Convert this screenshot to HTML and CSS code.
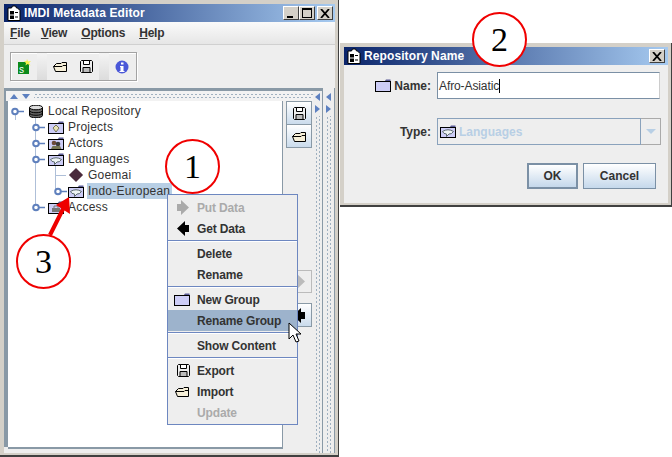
FILE: index.html
```html
<!DOCTYPE html>
<html lang="en">
<head>
<meta charset="utf-8">
<title>IMDI Metadata Editor</title>
<link rel="stylesheet" href="styles.css">
</head>
<body>
<svg class="defs" width="0" height="0" aria-hidden="true">
  <defs>
    <symbol id="app" viewBox="0 0 14 16">
      <path d="M1 3h3.500l1-2h3l1 2h1l2.500 2.500v10h-12z" fill="#fff" stroke="#000"/>
      <rect x="3" y="6" width="4" height="3.500" fill="#000"/>
      <rect x="3" y="10.500" width="4" height="3.500" fill="#000"/>
      <path d="M8 7.500h3M8 12h3" stroke="#000"/>
    </symbol>
    <symbol id="folder" viewBox="0 0 16 13">
      <path d="M9.500 2.500l1.500-2h4.500v2z" fill="#5b5b96"/>
      <rect x=".5" y="2.500" width="15" height="10" fill="#cdcdf6" stroke="#000"/>
    </symbol>
    <symbol id="lang" viewBox="0 0 16 13">
      <use href="#folder"/>
      <path d="M2.500 6.500q5.500-3.500 11 0q-2 3-4.500 2.500l-2.500 2.500v-2.500q-3 0-4-2.500z" fill="#eef4f4" stroke="#5c6a70"/>
    </symbol>
    <symbol id="proj" viewBox="0 0 16 13">
      <use href="#folder"/>
      <path d="M8 4l3 3-3 4-3-4z" fill="#e7e2b4" stroke="#76765a"/>
    </symbol>
    <symbol id="actors" viewBox="0 0 16 13">
      <use href="#folder"/>
      <circle cx="6" cy="6" r="2.300" fill="#6b4a3a"/>
      <circle cx="10" cy="7" r="2.300" fill="#3b3b3b"/>
      <path d="M3 12l1.500-3h7.500l1.500 3z" fill="#775"/>
    </symbol>
    <symbol id="access" viewBox="0 0 16 13">
      <use href="#folder"/>
      <rect x="4" y="7" width="8" height="4" fill="#777"/>
      <path d="M6 7v-2h4v2" fill="none" stroke="#777"/>
    </symbol>
    <symbol id="open" viewBox="0 0 16 13">
      <path d="M1.500 6.500l3-3h4.500l1-1h4.500v9h-11z" fill="#f6efd8" stroke="#000"/>
      <path d="M1.500 6.500h8.500l1-1h3.500" fill="none" stroke="#000"/>
    </symbol>
    <symbol id="save" viewBox="0 0 13 13">
      <path d="M1.500.5h10l1 1v10l-1 1h-10l-1-1v-10z" fill="#eee" stroke="#000"/>
      <path d="M3.500.5h6v4h-6z" fill="#fff" stroke="#000"/>
      <path d="M3 7.500h7v5h-7z" fill="#bbb" stroke="#000"/>
    </symbol>
    <symbol id="knob" viewBox="0 0 13 9">
      <path d="M7 4.500h6" stroke="#5f80bd" stroke-width="1.500"/>
      <circle cx="4" cy="4.500" r="2.800" fill="#fff" stroke="#5f80bd" stroke-width="2"/>
    </symbol>
    <symbol id="arrow" viewBox="0 0 12 15">
      <path d="M0 4h4v-4l8 7.500-8 7.500v-4h-4z"/>
    </symbol>
  </defs>
</svg>

<main class="window main-window">
  <header class="titlebar">
    <svg class="title-icon"><use href="#app"/></svg>
    <span class="title-text">IMDI Metadata Editor</span>
    <span class="title-buttons">
      <button class="winbtn"><span class="glyph-min"></span></button>
      <button class="winbtn"><span class="glyph-max"></span></button>
      <button class="winbtn winbtn-close"><svg viewBox="0 0 10 9" width="10" height="9"><path d="M1 0l8 9M9 0l-8 9" stroke="#000" stroke-width="1.800"/></svg></button>
    </span>
  </header>
  <nav class="menubar">
    <span class="menu-item"><u>F</u>ile</span>
    <span class="menu-item"><u>V</u>iew</span>
    <span class="menu-item"><u>O</u>ptions</span>
    <span class="menu-item"><u>H</u>elp</span>
  </nav>
  <div class="toolbar">
    <div class="toolbox">
      <span class="tool">
        <svg width="13" height="15" viewBox="0 0 13 15"><rect y="3" width="11" height="12" fill="#0c8a1c"/><text x="1" y="14" class="tool-s">s</text><path d="M9 0l1 2.500 3-.5-2 2 1.500 2.500-3-1.500-2 1.500.5-2.500-2-1.500 2.500-.5z" fill="#f4f04a"/></svg>
      </span>
      <span class="tool-sep"></span>
      <span class="tool"><svg width="16" height="13"><use href="#open"/></svg></span>
      <span class="tool tool-tight"><svg width="13" height="13"><use href="#save"/></svg></span>
      <span class="tool-sep"></span>
      <span class="tool"><svg width="14" height="14" viewBox="0 0 14 14"><circle cx="7" cy="7" r="6.500" fill="#4a57d8"/><rect x="6" y="2.500" width="2.500" height="2" fill="#fff"/><path d="M5 6h3.500v5h1v1h-5v-1h1v-4h-.5z" fill="#fff"/></svg></span>
    </div>
  </div>
  <div class="workspace">
    <div class="pane">
      <div class="left-area">
        <div class="split-top">
          <span class="tri-up"></span><span class="tri-down"></span><span class="dots-h"></span>
        </div>
        <div class="left-body">
          <div class="tree">
            <span class="vline vline-0"></span>
            <span class="vline vline-1"></span>
            <span class="vline vline-2"></span>
            <div class="row row-root"><svg class="knob" width="13" height="9"><use href="#knob"/></svg><svg class="db" width="14" height="13" viewBox="0 0 14 13"><path d="M.5 2.500v8c0 3 13 3 13 0v-8z" fill="#666" stroke="#000"/><ellipse cx="7" cy="2.500" rx="6.500" ry="2.300" fill="#ddd" stroke="#000"/><path d="M.5 5.500c0 3 13 3 13 0M.5 8c0 3 13 3 13 0" fill="none" stroke="#000"/></svg><span class="lbl">Local Repository</span></div>
            <div class="row row-1"><svg class="knob" width="13" height="9"><use href="#knob"/></svg><svg class="ico" width="16" height="13"><use href="#proj"/></svg><span class="lbl">Projects</span></div>
            <div class="row row-1"><svg class="knob" width="13" height="9"><use href="#knob"/></svg><svg class="ico" width="16" height="13"><use href="#actors"/></svg><span class="lbl">Actors</span></div>
            <div class="row row-1"><svg class="knob" width="13" height="9"><use href="#knob"/></svg><svg class="ico" width="16" height="13"><use href="#lang"/></svg><span class="lbl">Languages</span></div>
            <div class="row row-2"><span class="branch"></span><span class="diamond"></span><span class="lbl">Goemai</span></div>
            <div class="row row-2b"><svg class="knob" width="13" height="9"><use href="#knob"/></svg><svg class="ico" width="16" height="13"><use href="#lang"/></svg><span class="lbl lbl-sel">Indo-European</span></div>
            <div class="row row-1"><svg class="knob" width="13" height="9"><use href="#knob"/></svg><svg class="ico" width="16" height="13"><use href="#access"/></svg><span class="lbl">Access</span></div>
          </div>
          <div class="side">
            <div class="side-group">
              <button class="sidebtn"><svg width="13" height="13"><use href="#save"/></svg></button>
              <button class="sidebtn"><svg width="16" height="13"><use href="#open"/></svg></button>
            </div>
            <div class="side-low">
              <button class="sidebtn side-ghost"><svg width="12" height="15" fill="#bbb"><use href="#arrow"/></svg></button>
              <button class="sidebtn"><svg width="12" height="15" fill="#000" class="flip"><use href="#arrow"/></svg></button>
            </div>
          </div>
        </div>
      </div>
      <div class="strip strip-a"><span class="tri-left"></span><span class="tri-right"></span><span class="dots-v"></span></div>
    </div>
    <div class="strip strip-b"><span class="tri-left"></span><span class="tri-right"></span><span class="dots-v"></span></div>
  </div>
</main>

<div class="popup">
  <div class="pop-group">
    <div class="pop-item disabled"><svg width="12" height="15" fill="#aaa"><use href="#arrow"/></svg><span>Put Data</span></div>
    <div class="pop-item"><svg class="flip" width="12" height="15" fill="#000"><use href="#arrow"/></svg><span>Get Data</span></div>
  </div>
  <div class="pop-group">
    <div class="pop-item"><i></i><span>Delete</span></div>
    <div class="pop-item"><i></i><span>Rename</span></div>
  </div>
  <div class="pop-group">
    <div class="pop-item"><svg class="wide" width="16" height="13"><use href="#folder"/></svg><span>New Group</span></div>
    <div class="pop-item active"><i></i><span>Rename Group</span></div>
  </div>
  <div class="pop-group">
    <div class="pop-item"><i></i><span>Show Content</span></div>
  </div>
  <div class="pop-group">
    <div class="pop-item"><svg width="13" height="13"><use href="#save"/></svg><span>Export</span></div>
    <div class="pop-item"><svg class="wide" width="16" height="13"><use href="#open"/></svg><span>Import</span></div>
    <div class="pop-item disabled"><i></i><span>Update</span></div>
  </div>
</div>

<svg class="cursor" width="14" height="22" viewBox="0 0 14 22"><path d="M1 1v16l4-4 3 7 3-1-3-7h5z" fill="#fff" stroke="#000"/></svg>

<section class="window dialog">
  <header class="titlebar">
    <svg class="title-icon"><use href="#app"/></svg>
    <span class="title-text">Repository Name</span>
    <span class="title-buttons">
      <button class="winbtn winbtn-close"><svg viewBox="0 0 10 9" width="10" height="9"><path d="M1 0l8 9M9 0l-8 9" stroke="#000" stroke-width="1.800"/></svg></button>
    </span>
  </header>
  <div class="form">
    <div class="form-row">
      <div class="form-label"><svg width="16" height="13"><use href="#folder"/></svg><span>Name:</span></div>
      <div class="input"><span>Afro-Asiatic</span><span class="caret"></span></div>
    </div>
    <div class="form-row form-row-type">
      <div class="form-label"><span>Type:</span></div>
      <div class="combo">
        <div class="combo-field"><svg width="16" height="13"><use href="#lang"/></svg><span>Languages</span></div>
        <div class="combo-arrow"><span class="tri-combo"></span></div>
      </div>
    </div>
    <div class="actions">
      <button class="btn btn-default">OK</button>
      <button class="btn">Cancel</button>
    </div>
  </div>
</section>

<svg class="arrow-red" width="40" height="50" viewBox="0 0 40 50"><path d="M10 45L24 17" stroke="#ee0000" stroke-width="4"/><path d="M29 7L16 15 30 24z" fill="#ee0000"/></svg>
<div class="callout c1">1</div>
<div class="callout c2">2</div>
<div class="callout c3">3</div>
</body>
</html>
```

FILE: styles.css
```css
* { box-sizing: border-box; }
html, body { margin: 0; padding: 0; }
body {
  width: 672px; height: 457px; position: relative; overflow: hidden;
  background: #fff; font-family: "Liberation Sans", Arial, sans-serif;
  font-size: 12px; color: #333;
}
.defs { position: absolute; }
button { font-family: inherit; margin: 0; padding: 0; }

.window {
  position: absolute; display: flex; flex-direction: column;
  background: #eee;
  border: 4px solid #d4d0c8;
}
.main-window { left: 0; top: 0; width: 339px; height: 457px; }
.main-window::after, .dialog::after {
  content: ""; position: absolute; left: -4px; right: -4px; top: -4px; bottom: -4px;
  border-right: 1px solid #404040; border-bottom: 2px solid #404040; pointer-events: none;
}
.dialog { left: 340px; top: 43px; width: 332px; height: 164px; }

.titlebar {
  height: 18px; flex: none; display: flex; align-items: center;
  background: linear-gradient(to right, #0a246a, #a6caf0);
  color: #fff; font-weight: bold; font-size: 12px; letter-spacing: .1px; padding: 0 2px 0 3px;
}
.title-icon { width: 14px; height: 16px; margin-right: 3px; flex: none; }
.title-text { flex: 1; white-space: nowrap; }
.title-buttons { display: flex; }
.winbtn {
  width: 16px; height: 14px; background: #d4d0c8; display: flex; align-items: center; justify-content: center;
  border: 1px solid; border-color: #fff #404040 #404040 #fff;
}
.winbtn-close { margin-left: 2px; }
.glyph-min { width: 6px; height: 2px; background: #000; margin-top: 7px; margin-right: 3px; }
.glyph-max { width: 10px; height: 10px; border: 1px solid #000; border-top-width: 2px; }

.menubar {
  height: 23px; flex: none; display: flex; align-items: center; gap: 14px; padding: 0 0 1px 6px;
  background: linear-gradient(#fafafa, #e6e6e6); border-bottom: 1px solid #d0d0d0;
  font-weight: bold; color: #333; letter-spacing: -.2px;
}
.menu-item:first-child { margin-right: -3px; }
.toolbar { height: 43px; flex: none; padding: 7px 0 0 6px; background: #eee; }
.toolbox {
  width: 127px; height: 29px; border: 1px solid #a3a3a3; display: flex; align-items: stretch;
  background: #eee; box-shadow: inset 1px 1px 0 #fff, 1px 1px 0 #fff;
}
.tool { width: 28px; display: flex; align-items: center; justify-content: center; }
.tool-tight { width: 26px; }
.tool-sep { width: 10px; background: linear-gradient(#f4f4f4, #dcdcdc); }
.tool:first-child { width: 27px; }
.tool-s { font-size: 10px; fill: #fff; font-family: "Liberation Sans", sans-serif; }

.workspace { flex: 1; min-height: 0; display: flex; background: #eee; }
.pane {
  width: 319px; flex: none; display: flex; padding: 3px 0 0 4px;
  background: #eee linear-gradient(#8999a6, #8999a6) top left / 4px 359px no-repeat;
  box-shadow: inset 0 3px 0 #8999a6;
}
.left-area { width: 305px; flex: none; background: #eee; display: flex; flex-direction: column; }
.split-top {
  height: 10px; flex: none; display: flex; align-items: center; gap: 4px; padding-left: 4px;
  margin-left: -2px; background: #f2f2f2;
}
.tri-up { flex: none; border: 4px solid transparent; border-top: 0; border-bottom: 5px solid #5d80c0; width: 0; height: 0; }
.tri-down { flex: none; border: 4px solid transparent; border-bottom: 0; border-top: 5px solid #5d80c0; width: 0; height: 0; }
.dots-h {
  flex: 1; height: 6px;
  background-image: radial-gradient(circle, #9fb0c0 .7px, transparent 1px), radial-gradient(circle, #9fb0c0 .7px, transparent 1px);
  background-size: 4px 3px; background-position: 0 0, 2px 3px; background-repeat: repeat-x;
}
.left-body { flex: 1; min-height: 0; display: flex; }
.tree {
  width: 275px; flex: none; background: #fff; position: relative; padding-top: 2px;
  border-right: 1px solid #8999a6; border-bottom: 2px solid #8999a6; margin-bottom: 4px;
}
.row { height: 16px; display: flex; align-items: center; white-space: nowrap; position: relative; }
.lbl { letter-spacing: .22px; color: #333; }
.knob { flex: none; }
.row-root { padding-left: 3px; }
.db { margin: 0 5px; flex: none; }
.row-1 { padding-left: 24px; }
.ico { margin-left: 3px; margin-right: 4px; flex: none; }
.row-2 { padding-left: 48px; }
.branch { width: 10px; height: 1px; background: #aebfd8; flex: none; }
.diamond { width: 10px; height: 10px; background: #4a2a3c; transform: rotate(45deg); margin: 0 7px 0 5px; flex: none; }
.row-2b { padding-left: 46px; }
.row-2b .ico { margin-left: 1px; margin-right: 3px; }
.lbl-sel { background: #b8cfe5; padding: 0 1px; height: 16px; line-height: 16px; width: 85px; }
.vline { position: absolute; width: 1px; background: #aebfd8; }
.vline-0 { left: 7px; top: 13px; height: 6px; }
.vline-1 { left: 27px; top: 15px; height: 91px; }
.vline-2 { left: 47px; top: 63px; height: 27px; }

.side { flex: 1; display: flex; flex-direction: column; padding-left: 3px; }
.side-group, .side-low { display: flex; flex-direction: column; }
.side-low { margin-top: 122px; }
.sidebtn {
  width: 26px; height: 24px; display: flex; align-items: center; justify-content: center; flex: none;
  border: 1px solid #8999a6; background: linear-gradient(#fff, #cadbec);
}
.side-group .sidebtn + .sidebtn { margin-top: -1px; }
.side-ghost { background: #eee; border-color: #bbb; margin-bottom: 10px; height: 23px; }
.flip { transform: scaleX(-1); }

.strip {
  flex: none; display: flex; flex-direction: column; align-items: center; background: #eee;
}
.strip-a { width: 10px; padding-top: 2px; border-right: 1px solid #8999a6; }
.strip-b { width: 12px; padding-top: 5px; border-right: 1px solid #8999a6; }
.tri-left, .tri-right { width: 0; height: 0; border: 4px solid transparent; flex: none; }
.tri-left { border-left: 0; border-right: 5px solid #5d80c0; }
.tri-right { border-right: 0; border-left: 5px solid #5d80c0; margin-top: 4px; }
.dots-v {
  flex: 1; width: 6px; margin-top: 3px;
  background-image: radial-gradient(circle, #9fb0c0 .7px, transparent 1px), radial-gradient(circle, #9fb0c0 .7px, transparent 1px);
  background-size: 3px 4px; background-position: 0 0, 3px 2px; background-repeat: repeat-y;
}

.popup {
  position: absolute; left: 167px; top: 194px; width: 131px; height: 231px;
  background: #eee; border: 1px solid #6d87c0; font-weight: bold; color: #333;
  display: flex; flex-direction: column; letter-spacing: -.15px;
}
.pop-group { border-bottom: 1px solid #6d87c0; box-shadow: inset 0 1px 0 #fff; padding: 2px 0 1px; }
.pop-group:last-child { border-bottom: 0; }
.pop-group:first-child { box-shadow: none; }
.pop-item { height: 21px; display: flex; align-items: center; padding-left: 9px; position: relative; }
.pop-item svg, .pop-item i { flex: none; display: block; }
.pop-item svg.wide { margin-left: -3px; }
.pop-item > span { position: absolute; left: 29px; }
.pop-item.disabled { color: #aaa; }
.pop-item.active { background: #9db3cc; }

.cursor { position: absolute; left: 288px; top: 322px; }

.dialog .winbtn { margin-right: 1px; }
.form { flex: 1; display: flex; flex-direction: column; padding: 7px 7px 0 0; background: #eee; }
.form-row { display: flex; align-items: center; height: 27px; }
.form-row-type { margin-top: 19px; }
.form-label { width: 93px; display: flex; align-items: center; justify-content: flex-end; gap: 3px; padding-right: 6px; font-weight: bold; }
.input {
  width: 223px; height: 27px; flex: none; background: #fff; border: 1px solid #7b90a5;
  border-right-color: #ccc; padding: 0 1px; display: flex; align-items: center; letter-spacing: -.1px; color: #333;
}
.caret { width: 1px; height: 14px; background: #000; }
.combo { width: 224px; height: 27px; display: flex; flex: none; }
.combo-field {
  flex: 1; border: 1px solid #8aa2bc; display: flex; align-items: center; gap: 3px; padding-left: 2px;
  color: #b8cfe5; font-weight: bold; background: #eee;
}
.combo-arrow { width: 20px; border: 1px solid #aaa; border-left: 0; display: flex; align-items: center; justify-content: center; }
.tri-combo { width: 0; height: 0; border: 5px solid transparent; border-bottom: 0; border-top: 5px solid #b8cfe5; }
.actions { display: flex; justify-content: flex-end; gap: 5px; margin-top: 18px; padding-right: 5px; }
.btn {
  width: 73px; height: 26px; border: 1px solid #7b90a5; background: linear-gradient(#fff, #c5d8eb);
  font-weight: bold; color: #333; font-size: 12px;
}
.btn-default { width: 51px; border-width: 2px; }

.callout {
  position: absolute; width: 55px; height: 55px; border-radius: 50%; border: 2.5px solid #f00000; background: #fff;
  font-family: "Liberation Serif", serif; font-size: 34px; color: #000; display: flex; align-items: center; justify-content: center;
}
.c1 { left: 165px; top: 139px; }
.c2 { left: 472px; top: 12px; }
.c3 { left: 16px; top: 234px; }
.arrow-red { position: absolute; left: 40px; top: 190px; }
```
